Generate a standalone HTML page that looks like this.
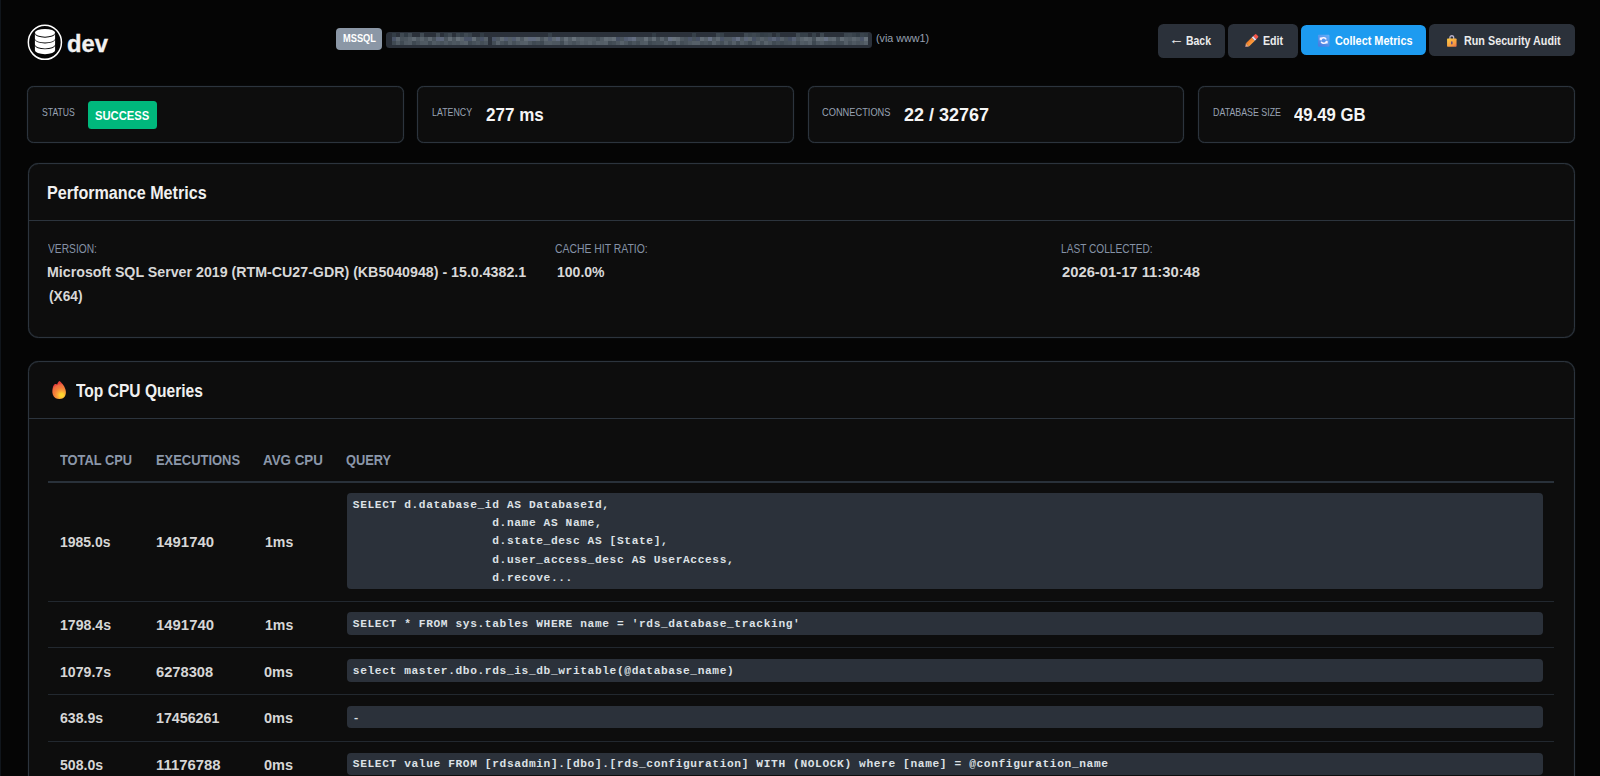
<!DOCTYPE html>
<html lang="en">
<head>
<meta charset="utf-8">
<title>dev - Database Details</title>
<style>
*{box-sizing:border-box;margin:0;padding:0}
html,body{width:1600px;height:776px;overflow:hidden;background:#050505}
body{font-family:"Liberation Sans", sans-serif;color:#e6e6e6;position:relative}
.edge{position:absolute;left:0;top:0;width:1px;height:776px;background:#10151b}
.abs{position:absolute}
.t{position:absolute;display:block;white-space:pre;line-height:1;transform-origin:0 0}
.badge{left:335.5px;top:28px;width:46.5px;height:21.5px;border-radius:4px;background:#8b97a6}
.conn{left:385.5px;top:32px;width:486px;height:16px;border-radius:3.5px;background:#2b313a;overflow:hidden}
.mos{position:absolute;left:0;top:0}
.btn{border-radius:5.5px;background:#2b313a}
.btn.blue{background:#1d9bf0}
.stat{top:85.6px;width:376.5px;height:57.2px;box-shadow:0 0 1px 0 #2c343d,inset 0 0 1px 0 #2c343d;border:1.25px solid #2c343d;border-radius:6.5px;background:#0d0d0d}
.okb{left:88px;top:101.2px;width:69px;height:27.6px;border-radius:3.5px;background:#00b87c}
.card{left:27.5px;width:1547.3px;box-shadow:0 0 1px 0 #2c343d,inset 0 0 1px 0 #2c343d;border:1.25px solid #2c343d;border-radius:10.5px;background:#0d0d0d}
.hr{position:absolute;left:0;right:0;height:1.25px;background:#2c343d}
.rl{position:absolute;left:48px;width:1506px;height:1px;background:#22282f}
.code{position:absolute;left:346.5px;width:1196.4px;border-radius:4px;background:#2b313a;font-family:"Liberation Mono", monospace;font-size:11.2px;letter-spacing:0.624px;font-weight:700;line-height:18.36px;color:#dde1e6;padding:0 0 0 6.3px;white-space:pre;overflow:hidden}
</style>
</head>
<body>
<div class="edge"></div>

<header>
<svg class="abs" style="left:27px;top:24px" width="36" height="37" viewBox="0 0 36 37">
<ellipse cx="17.9" cy="18.3" rx="16.55" ry="17.05" fill="none" stroke="#fff" stroke-width="1.5"/>
<g fill="#fff"><ellipse cx="18" cy="8.8" rx="10.1" ry="3.9"/><path d="M7.9 9.75A10.1 3.9 0 0 0 28.1 9.75V14.65A10.1 3.9 0 0 1 7.9 14.65Z"/><path d="M7.9 15.60A10.1 3.9 0 0 0 28.1 15.60V20.50A10.1 3.9 0 0 1 7.9 20.50Z"/><path d="M7.9 21.45A10.1 3.9 0 0 0 28.1 21.45V26.35A10.1 3.9 0 0 1 7.9 26.35Z"/></g>
</svg>
<h1><span class="t" style="left:66.73px;top:32px;font-size:24.60px;font-weight:700;color:#f2f2f2;transform:scaleX(0.9664);-webkit-text-stroke:0.35px #f2f2f2;">dev</span></h1>
<div class="abs badge"></div><span class="t" style="left:342.50px;top:33px;font-size:10.90px;font-weight:700;color:#ffffff;transform:scaleX(0.8523);">MSSQL</span>
<div class="abs conn"><svg class="mos" width="486" height="16" viewBox="0 0 486 16" aria-hidden="true"><rect x="6" y="1" width="4" height="4" fill="#343e47"/><rect x="6" y="5" width="4" height="4" fill="#495366"/><rect x="6" y="9" width="4" height="4" fill="#404a53"/><rect x="10" y="5" width="4" height="4" fill="#5d6770"/><rect x="10" y="9" width="4" height="4" fill="#505a63"/><rect x="14" y="1" width="4" height="4" fill="#404a53"/><rect x="14" y="5" width="4" height="4" fill="#48525b"/><rect x="14" y="9" width="4" height="4" fill="#404a53"/><rect x="18" y="1" width="4" height="4" fill="#323c45"/><rect x="18" y="5" width="4" height="4" fill="#4b555e"/><rect x="18" y="9" width="4" height="4" fill="#4f5962"/><rect x="22" y="1" width="4" height="4" fill="#424c55"/><rect x="22" y="5" width="4" height="4" fill="#545e67"/><rect x="22" y="9" width="4" height="4" fill="#525c65"/><rect x="26" y="5" width="4" height="4" fill="#5f6972"/><rect x="26" y="9" width="4" height="4" fill="#3f4952"/><rect x="30" y="5" width="4" height="4" fill="#4e5861"/><rect x="30" y="9" width="4" height="4" fill="#47515a"/><rect x="34" y="1" width="4" height="4" fill="#414b54"/><rect x="34" y="5" width="4" height="4" fill="#59636c"/><rect x="34" y="9" width="4" height="4" fill="#4f5962"/><rect x="38" y="5" width="4" height="4" fill="#4c565f"/><rect x="38" y="9" width="4" height="4" fill="#505a63"/><rect x="42" y="5" width="4" height="4" fill="#5d6770"/><rect x="42" y="9" width="4" height="4" fill="#414b54"/><rect x="46" y="5" width="4" height="4" fill="#49535c"/><rect x="46" y="9" width="4" height="4" fill="#515b64"/><rect x="50" y="1" width="4" height="4" fill="#414b54"/><rect x="50" y="5" width="4" height="4" fill="#5a6477"/><rect x="50" y="9" width="4" height="4" fill="#4c565f"/><rect x="54" y="5" width="4" height="4" fill="#5d677a"/><rect x="54" y="9" width="4" height="4" fill="#47515a"/><rect x="58" y="1" width="4" height="4" fill="#353f48"/><rect x="58" y="5" width="4" height="4" fill="#4b555e"/><rect x="58" y="9" width="4" height="4" fill="#505a63"/><rect x="62" y="1" width="4" height="4" fill="#3f4952"/><rect x="62" y="5" width="4" height="4" fill="#626c75"/><rect x="62" y="9" width="4" height="4" fill="#47515a"/><rect x="66" y="5" width="4" height="4" fill="#4d5760"/><rect x="66" y="9" width="4" height="4" fill="#4e5861"/><rect x="70" y="1" width="4" height="4" fill="#3a444d"/><rect x="70" y="5" width="4" height="4" fill="#656f78"/><rect x="70" y="9" width="4" height="4" fill="#4b555e"/><rect x="74" y="1" width="4" height="4" fill="#323c45"/><rect x="74" y="5" width="4" height="4" fill="#5b656e"/><rect x="74" y="9" width="4" height="4" fill="#545e67"/><rect x="78" y="1" width="4" height="4" fill="#3f4952"/><rect x="78" y="5" width="4" height="4" fill="#4a5467"/><rect x="78" y="9" width="4" height="4" fill="#58626b"/><rect x="82" y="1" width="4" height="4" fill="#38424b"/><rect x="82" y="5" width="4" height="4" fill="#4a5467"/><rect x="82" y="9" width="4" height="4" fill="#3f4952"/><rect x="86" y="5" width="4" height="4" fill="#626c75"/><rect x="86" y="9" width="4" height="4" fill="#47515a"/><rect x="90" y="5" width="4" height="4" fill="#47515a"/><rect x="90" y="9" width="4" height="4" fill="#4c565f"/><rect x="94" y="1" width="4" height="4" fill="#333d46"/><rect x="94" y="5" width="4" height="4" fill="#495366"/><rect x="94" y="9" width="4" height="4" fill="#444e57"/><rect x="98" y="5" width="4" height="4" fill="#555f68"/><rect x="98" y="9" width="4" height="4" fill="#4a545d"/><rect x="106" y="5" width="4" height="4" fill="#4b5568"/><rect x="106" y="9" width="4" height="4" fill="#434d56"/><rect x="110" y="5" width="4" height="4" fill="#4e5861"/><rect x="110" y="9" width="4" height="4" fill="#58626b"/><rect x="114" y="5" width="4" height="4" fill="#606a73"/><rect x="114" y="9" width="4" height="4" fill="#49535c"/><rect x="118" y="5" width="4" height="4" fill="#545e71"/><rect x="118" y="9" width="4" height="4" fill="#424c55"/><rect x="122" y="5" width="4" height="4" fill="#545e67"/><rect x="122" y="9" width="4" height="4" fill="#535d66"/><rect x="126" y="5" width="4" height="4" fill="#515b6e"/><rect x="126" y="9" width="4" height="4" fill="#465059"/><rect x="130" y="5" width="4" height="4" fill="#606a73"/><rect x="130" y="9" width="4" height="4" fill="#4f5962"/><rect x="134" y="5" width="4" height="4" fill="#4e5861"/><rect x="134" y="9" width="4" height="4" fill="#545e67"/><rect x="138" y="5" width="4" height="4" fill="#636d76"/><rect x="138" y="9" width="4" height="4" fill="#566069"/><rect x="142" y="5" width="4" height="4" fill="#5f697c"/><rect x="142" y="9" width="4" height="4" fill="#4a545d"/><rect x="146" y="5" width="4" height="4" fill="#5f697c"/><rect x="146" y="9" width="4" height="4" fill="#3f4952"/><rect x="150" y="5" width="4" height="4" fill="#626c75"/><rect x="150" y="9" width="4" height="4" fill="#434d56"/><rect x="154" y="5" width="4" height="4" fill="#4c565f"/><rect x="154" y="9" width="4" height="4" fill="#3e4851"/><rect x="158" y="5" width="4" height="4" fill="#5d6770"/><rect x="158" y="9" width="4" height="4" fill="#515b64"/><rect x="162" y="1" width="4" height="4" fill="#364049"/><rect x="162" y="5" width="4" height="4" fill="#4f596c"/><rect x="162" y="9" width="4" height="4" fill="#525c65"/><rect x="166" y="5" width="4" height="4" fill="#5d6770"/><rect x="166" y="9" width="4" height="4" fill="#4d5760"/><rect x="170" y="5" width="4" height="4" fill="#636d80"/><rect x="170" y="9" width="4" height="4" fill="#4d5760"/><rect x="174" y="5" width="4" height="4" fill="#4f5962"/><rect x="174" y="9" width="4" height="4" fill="#414b54"/><rect x="178" y="5" width="4" height="4" fill="#646e77"/><rect x="178" y="9" width="4" height="4" fill="#58626b"/><rect x="182" y="5" width="4" height="4" fill="#535d66"/><rect x="182" y="9" width="4" height="4" fill="#4e5861"/><rect x="186" y="5" width="4" height="4" fill="#67717a"/><rect x="186" y="9" width="4" height="4" fill="#47515a"/><rect x="190" y="5" width="4" height="4" fill="#566069"/><rect x="190" y="9" width="4" height="4" fill="#4e5861"/><rect x="194" y="5" width="4" height="4" fill="#5c666f"/><rect x="194" y="9" width="4" height="4" fill="#566069"/><rect x="198" y="5" width="4" height="4" fill="#545e67"/><rect x="198" y="9" width="4" height="4" fill="#515b64"/><rect x="202" y="5" width="4" height="4" fill="#555f68"/><rect x="202" y="9" width="4" height="4" fill="#58626b"/><rect x="206" y="5" width="4" height="4" fill="#525c65"/><rect x="206" y="9" width="4" height="4" fill="#4e5861"/><rect x="210" y="5" width="4" height="4" fill="#47515a"/><rect x="210" y="9" width="4" height="4" fill="#57616a"/><rect x="214" y="5" width="4" height="4" fill="#525c65"/><rect x="214" y="9" width="4" height="4" fill="#545e67"/><rect x="218" y="5" width="4" height="4" fill="#626c75"/><rect x="218" y="9" width="4" height="4" fill="#57616a"/><rect x="222" y="5" width="4" height="4" fill="#5d6770"/><rect x="222" y="9" width="4" height="4" fill="#404a53"/><rect x="226" y="5" width="4" height="4" fill="#646e77"/><rect x="226" y="9" width="4" height="4" fill="#444e57"/><rect x="230" y="5" width="4" height="4" fill="#465063"/><rect x="230" y="9" width="4" height="4" fill="#4d5760"/><rect x="234" y="5" width="4" height="4" fill="#4b555e"/><rect x="234" y="9" width="4" height="4" fill="#58626b"/><rect x="238" y="5" width="4" height="4" fill="#525c6f"/><rect x="238" y="9" width="4" height="4" fill="#4d5760"/><rect x="242" y="5" width="4" height="4" fill="#5b6578"/><rect x="242" y="9" width="4" height="4" fill="#404a53"/><rect x="246" y="5" width="4" height="4" fill="#636d80"/><rect x="246" y="9" width="4" height="4" fill="#4a545d"/><rect x="250" y="5" width="4" height="4" fill="#505a63"/><rect x="250" y="9" width="4" height="4" fill="#434d56"/><rect x="254" y="5" width="4" height="4" fill="#4f5962"/><rect x="254" y="9" width="4" height="4" fill="#505a63"/><rect x="258" y="5" width="4" height="4" fill="#646e77"/><rect x="258" y="9" width="4" height="4" fill="#535d66"/><rect x="262" y="5" width="4" height="4" fill="#4e5861"/><rect x="262" y="9" width="4" height="4" fill="#3e4851"/><rect x="266" y="1" width="4" height="4" fill="#333d46"/><rect x="266" y="5" width="4" height="4" fill="#616b74"/><rect x="266" y="9" width="4" height="4" fill="#444e57"/><rect x="270" y="5" width="4" height="4" fill="#47515a"/><rect x="270" y="9" width="4" height="4" fill="#465059"/><rect x="274" y="5" width="4" height="4" fill="#5a646d"/><rect x="274" y="9" width="4" height="4" fill="#465059"/><rect x="278" y="5" width="4" height="4" fill="#49535c"/><rect x="278" y="9" width="4" height="4" fill="#555f68"/><rect x="282" y="5" width="4" height="4" fill="#677184"/><rect x="282" y="9" width="4" height="4" fill="#4b555e"/><rect x="286" y="5" width="4" height="4" fill="#68727b"/><rect x="286" y="9" width="4" height="4" fill="#424c55"/><rect x="290" y="5" width="4" height="4" fill="#626c75"/><rect x="290" y="9" width="4" height="4" fill="#566069"/><rect x="294" y="5" width="4" height="4" fill="#4f5962"/><rect x="294" y="9" width="4" height="4" fill="#434d56"/><rect x="298" y="5" width="4" height="4" fill="#49535c"/><rect x="298" y="9" width="4" height="4" fill="#48525b"/><rect x="302" y="5" width="4" height="4" fill="#4c5669"/><rect x="302" y="9" width="4" height="4" fill="#4f5962"/><rect x="306" y="1" width="4" height="4" fill="#364049"/><rect x="306" y="5" width="4" height="4" fill="#48525b"/><rect x="306" y="9" width="4" height="4" fill="#566069"/><rect x="310" y="5" width="4" height="4" fill="#475164"/><rect x="310" y="9" width="4" height="4" fill="#566069"/><rect x="314" y="5" width="4" height="4" fill="#626c75"/><rect x="314" y="9" width="4" height="4" fill="#48525b"/><rect x="318" y="5" width="4" height="4" fill="#57616a"/><rect x="318" y="9" width="4" height="4" fill="#4c565f"/><rect x="322" y="5" width="4" height="4" fill="#667083"/><rect x="322" y="9" width="4" height="4" fill="#454f58"/><rect x="326" y="5" width="4" height="4" fill="#525c65"/><rect x="326" y="9" width="4" height="4" fill="#58626b"/><rect x="330" y="1" width="4" height="4" fill="#3d4750"/><rect x="330" y="5" width="4" height="4" fill="#5f6972"/><rect x="330" y="9" width="4" height="4" fill="#4c565f"/><rect x="334" y="1" width="4" height="4" fill="#37414a"/><rect x="334" y="5" width="4" height="4" fill="#4a5467"/><rect x="334" y="9" width="4" height="4" fill="#444e57"/><rect x="338" y="5" width="4" height="4" fill="#4f5962"/><rect x="338" y="9" width="4" height="4" fill="#545e67"/><rect x="342" y="5" width="4" height="4" fill="#4f5962"/><rect x="342" y="9" width="4" height="4" fill="#465059"/><rect x="346" y="5" width="4" height="4" fill="#545e71"/><rect x="346" y="9" width="4" height="4" fill="#555f68"/><rect x="350" y="5" width="4" height="4" fill="#656f82"/><rect x="350" y="9" width="4" height="4" fill="#434d56"/><rect x="354" y="5" width="4" height="4" fill="#505a63"/><rect x="354" y="9" width="4" height="4" fill="#545e67"/><rect x="358" y="1" width="4" height="4" fill="#404a53"/><rect x="358" y="5" width="4" height="4" fill="#5b6578"/><rect x="358" y="9" width="4" height="4" fill="#4b555e"/><rect x="362" y="1" width="4" height="4" fill="#3a444d"/><rect x="362" y="5" width="4" height="4" fill="#5d6770"/><rect x="362" y="9" width="4" height="4" fill="#3e4851"/><rect x="366" y="1" width="4" height="4" fill="#3e4851"/><rect x="366" y="5" width="4" height="4" fill="#475164"/><rect x="366" y="9" width="4" height="4" fill="#4a545d"/><rect x="370" y="1" width="4" height="4" fill="#39434c"/><rect x="370" y="5" width="4" height="4" fill="#4d5760"/><rect x="370" y="9" width="4" height="4" fill="#57616a"/><rect x="374" y="1" width="4" height="4" fill="#333d46"/><rect x="374" y="5" width="4" height="4" fill="#566069"/><rect x="374" y="9" width="4" height="4" fill="#465059"/><rect x="378" y="1" width="4" height="4" fill="#353f48"/><rect x="378" y="5" width="4" height="4" fill="#4e5861"/><rect x="378" y="9" width="4" height="4" fill="#58626b"/><rect x="382" y="1" width="4" height="4" fill="#38424b"/><rect x="382" y="5" width="4" height="4" fill="#4f596c"/><rect x="382" y="9" width="4" height="4" fill="#4f5962"/><rect x="386" y="5" width="4" height="4" fill="#5a6477"/><rect x="386" y="9" width="4" height="4" fill="#404a53"/><rect x="390" y="1" width="4" height="4" fill="#353f48"/><rect x="390" y="5" width="4" height="4" fill="#4a5467"/><rect x="390" y="9" width="4" height="4" fill="#465059"/><rect x="394" y="5" width="4" height="4" fill="#566069"/><rect x="394" y="9" width="4" height="4" fill="#404a53"/><rect x="398" y="5" width="4" height="4" fill="#4a545d"/><rect x="398" y="9" width="4" height="4" fill="#465059"/><rect x="402" y="5" width="4" height="4" fill="#465063"/><rect x="402" y="9" width="4" height="4" fill="#48525b"/><rect x="406" y="5" width="4" height="4" fill="#576174"/><rect x="406" y="9" width="4" height="4" fill="#515b64"/><rect x="410" y="1" width="4" height="4" fill="#404a53"/><rect x="410" y="5" width="4" height="4" fill="#4d5760"/><rect x="410" y="9" width="4" height="4" fill="#434d56"/><rect x="414" y="1" width="4" height="4" fill="#353f48"/><rect x="414" y="5" width="4" height="4" fill="#59636c"/><rect x="414" y="9" width="4" height="4" fill="#525c65"/><rect x="418" y="1" width="4" height="4" fill="#364049"/><rect x="418" y="5" width="4" height="4" fill="#626c75"/><rect x="418" y="9" width="4" height="4" fill="#4e5861"/><rect x="422" y="5" width="4" height="4" fill="#5c666f"/><rect x="422" y="9" width="4" height="4" fill="#57616a"/><rect x="426" y="1" width="4" height="4" fill="#38424b"/><rect x="426" y="5" width="4" height="4" fill="#465059"/><rect x="426" y="9" width="4" height="4" fill="#3e4851"/><rect x="430" y="5" width="4" height="4" fill="#667079"/><rect x="430" y="9" width="4" height="4" fill="#4d5760"/><rect x="434" y="1" width="4" height="4" fill="#3e4851"/><rect x="434" y="5" width="4" height="4" fill="#616b74"/><rect x="434" y="9" width="4" height="4" fill="#535d66"/><rect x="438" y="5" width="4" height="4" fill="#667083"/><rect x="438" y="9" width="4" height="4" fill="#47515a"/><rect x="442" y="5" width="4" height="4" fill="#5b656e"/><rect x="442" y="9" width="4" height="4" fill="#444e57"/><rect x="446" y="5" width="4" height="4" fill="#5f6972"/><rect x="446" y="9" width="4" height="4" fill="#49535c"/><rect x="450" y="5" width="4" height="4" fill="#465059"/><rect x="450" y="9" width="4" height="4" fill="#404a53"/><rect x="454" y="5" width="4" height="4" fill="#616b74"/><rect x="454" y="9" width="4" height="4" fill="#434d56"/><rect x="458" y="1" width="4" height="4" fill="#3c464f"/><rect x="458" y="5" width="4" height="4" fill="#555f68"/><rect x="458" y="9" width="4" height="4" fill="#545e67"/><rect x="462" y="1" width="4" height="4" fill="#3e4851"/><rect x="462" y="5" width="4" height="4" fill="#505a63"/><rect x="462" y="9" width="4" height="4" fill="#465059"/><rect x="466" y="1" width="4" height="4" fill="#38424b"/><rect x="466" y="5" width="4" height="4" fill="#5b656e"/><rect x="466" y="9" width="4" height="4" fill="#4f5962"/><rect x="470" y="1" width="4" height="4" fill="#313b44"/><rect x="470" y="5" width="4" height="4" fill="#535d66"/><rect x="470" y="9" width="4" height="4" fill="#49535c"/><rect x="474" y="1" width="4" height="4" fill="#3a444d"/><rect x="474" y="5" width="4" height="4" fill="#4b5568"/><rect x="474" y="9" width="4" height="4" fill="#4d5760"/><rect x="478" y="1" width="4" height="4" fill="#364049"/><rect x="478" y="5" width="4" height="4" fill="#667079"/><rect x="478" y="9" width="4" height="4" fill="#566069"/></svg></div>
<span class="t" style="left:876.00px;top:33px;font-size:11.50px;color:#98a2b3;transform:scaleX(0.9345);">(via www1)</span>
<nav>
<div class="abs btn" style="left:1158px;top:24px;width:67px;height:33.5px"></div><span class="t" style="left:1169.44px;top:32px;font-size:14.50px;font-weight:700;color:#ececec;transform:scaleX(1.0300);">←</span><span class="t" style="left:1185.60px;top:35px;font-size:12.72px;font-weight:700;color:#ececec;transform:scaleX(0.8210);">Back</span>
<div class="abs btn" style="left:1228.2px;top:24px;width:69.7px;height:33.5px"></div><svg class="abs" style="left:1241px;top:30px" width="21" height="21" viewBox="-10.5 -10.5 21 21" aria-hidden="true">
<defs><linearGradient id="pg" x1="0" y1="0" x2="0" y2="1"><stop offset="0" stop-color="#f07c28"/><stop offset="1" stop-color="#ffa040"/></linearGradient></defs>
<g transform="translate(0.1,0.3) rotate(-44.5)">
<path d="M-8.800 0L-5.900-2.200V2.200Z" fill="#e3ae86"/>
<path d="M-8.800 0L-7.600-.9V.9Z" fill="#9c4f86"/>
<rect x="-5.900" y="-2.200" width="8.300" height="4.400" fill="url(#pg)"/>
<rect x="2.400" y="-2.200" width="2.100" height="4.400" fill="#e4dcf2"/>
<path d="M4.500-2.200H6.800Q7.900-2.200 7.900-1.100V1.100Q7.900 2.200 6.800 2.200H4.500Z" fill="#f4564a"/>
</g></svg><span class="t" style="left:1263.10px;top:35px;font-size:12.72px;font-weight:700;color:#ececec;transform:scaleX(0.8360);">Edit</span>
<div class="abs btn blue" style="left:1301.1px;top:25px;width:124.8px;height:29.8px"></div><svg class="abs" style="left:1317px;top:34px" width="13" height="14" viewBox="0 0 13 14" aria-hidden="true">
<defs><linearGradient id="rg" x1="1" y1="0" x2="0.300" y2="1"><stop offset="0" stop-color="#66b1f9"/><stop offset="1" stop-color="#4a7ee1"/></linearGradient></defs>
<g transform="translate(0.960,0.850)">
<rect x="0" y="0" width="11.500" height="11.800" rx="0.800" fill="url(#rg)"/>
<g fill="none" stroke="#fbf4ff" stroke-width="1.500" stroke-linecap="round">
<path d="M3.000 4.850A2.800 2.800 0 0 1 7.900 4.050"/>
<path d="M8.400 6.550A2.800 2.800 0 0 1 3.500 7.350"/>
</g>
<path d="M1.700 2.750H4.700L1.700 5.550Z" fill="#fbf4ff"/>
<path d="M9.700 8.650H6.700L9.700 5.850Z" fill="#fbf4ff"/>
</g>
</svg><span class="t" style="left:1335.10px;top:34px;font-size:13.50px;font-weight:700;color:#ffffff;transform:scaleX(0.8072);">Collect Metrics</span>
<div class="abs btn" style="left:1429px;top:24px;width:146px;height:31.6px"></div><svg class="abs" style="left:1445px;top:33px" width="14" height="16" viewBox="0 0 14 16" aria-hidden="true">
<defs><linearGradient id="lg" x1="0.100" y1="0" x2="0.900" y2="1"><stop offset="0" stop-color="#fdcb44"/><stop offset="0.700" stop-color="#f89a42"/><stop offset="1" stop-color="#e87048"/></linearGradient></defs>
<g transform="translate(0.770,0.930)">
<path d="M4.150 5.000V3.700A1.900 1.900 0 0 1 7.950 3.700V5.000" fill="none" stroke="#b9b1cb" stroke-width="1.300"/>
<rect x="1.300" y="4.500" width="9.500" height="8.300" rx="0.700" fill="url(#lg)"/>
<rect x="5.300" y="7.200" width="1.500" height="3.300" rx="0.750" fill="#5c4a86"/>
</g>
</svg><span class="t" style="left:1463.50px;top:34px;font-size:13.50px;font-weight:700;color:#ececec;transform:scaleX(0.7983);">Run Security Audit</span>
</nav>
</header>

<section>
<div class="abs stat" style="left:27.1px"></div><span class="t" style="left:41.60px;top:106px;font-size:11.77px;color:#98a2b3;transform:scaleX(0.7363);">STATUS</span><div class="abs okb"></div><span class="t" style="left:95.40px;top:109px;font-size:13.66px;font-weight:700;color:#ffffff;transform:scaleX(0.8223);">SUCCESS</span>
<div class="abs stat" style="left:417.2px"></div><span class="t" style="left:431.90px;top:106px;font-size:11.77px;color:#98a2b3;transform:scaleX(0.7508);">LATENCY</span><span class="t" style="left:486.30px;top:105px;font-size:19.04px;font-weight:700;color:#f5f5f5;transform:scaleX(0.8943);">277 ms</span>
<div class="abs stat" style="left:807.8px"></div><span class="t" style="left:822.30px;top:106px;font-size:11.77px;color:#98a2b3;transform:scaleX(0.7877);">CONNECTIONS</span><span class="t" style="left:904.40px;top:105px;font-size:19.04px;font-weight:700;color:#f5f5f5;transform:scaleX(0.9444);">22 / 32767</span>
<div class="abs stat" style="left:1198.1px"></div><span class="t" style="left:1212.90px;top:106px;font-size:11.77px;color:#98a2b3;transform:scaleX(0.7517);">DATABASE SIZE</span><span class="t" style="left:1294.40px;top:105px;font-size:19.04px;font-weight:700;color:#f5f5f5;transform:scaleX(0.8784);">49.49 GB</span>
</section>

<section>
<div class="abs card" style="top:163px;height:174.8px"><div class="hr" style="top:55.6px"></div></div>
<h2><span class="t" style="left:46.93px;top:184px;font-size:18.53px;font-weight:700;color:#f0f0f0;transform:scaleX(0.8715);">Performance Metrics</span></h2>
<span class="t" style="left:48.10px;top:242px;font-size:13.23px;color:#8592a6;transform:scaleX(0.7744);">VERSION:</span><span class="t" style="left:47.18px;top:264px;font-size:15.41px;font-weight:700;color:#d8d8d8;transform:scaleX(0.9224);">Microsoft SQL Server 2019 (RTM-CU27-GDR) (KB5040948) - 15.0.4382.1</span><span class="t" style="left:48.60px;top:288px;font-size:15.41px;font-weight:700;color:#d8d8d8;transform:scaleX(0.8904);">(X64)</span>
<span class="t" style="left:555.40px;top:242px;font-size:13.23px;color:#8592a6;transform:scaleX(0.7876);">CACHE HIT RATIO:</span><span class="t" style="left:556.50px;top:264px;font-size:15.41px;font-weight:700;color:#d8d8d8;transform:scaleX(0.9102);">100.0%</span>
<span class="t" style="left:1061.23px;top:242px;font-size:13.23px;color:#8592a6;transform:scaleX(0.7665);">LAST COLLECTED:</span><span class="t" style="left:1062.20px;top:264px;font-size:15.41px;font-weight:700;color:#d8d8d8;transform:scaleX(0.9591);">2026-01-17 11:30:48</span>
</section>

<section>
<div class="abs card" style="top:360.8px;height:440px"><div class="hr" style="top:56.4px"></div></div>
<svg class="abs" style="left:51px;top:380px" width="17" height="20" viewBox="0 0 17 20" aria-hidden="true">
<defs><radialGradient id="fg" cx="10.600" cy="15.200" r="12" gradientUnits="userSpaceOnUse"><stop offset="0" stop-color="#ffdb2e"/><stop offset="0.160" stop-color="#ffd030"/><stop offset="0.340" stop-color="#fba838"/><stop offset="0.600" stop-color="#f4803a"/><stop offset="0.860" stop-color="#ee6a40"/><stop offset="1" stop-color="#e6403a"/></radialGradient></defs>
<path d="M8.700 1C10.400 2.600 13.300 5.600 14.400 9.200C15.600 13 14.600 16.600 12.000 18.300C10.200 19.300 6.500 19.300 4.700 18.300C2.000 16.700 1.000 13.400 1.400 10C1.700 7.600 2.300 5.400 3.600 4.300C4.400 3.700 5.600 3.900 6.300 4.400C6.500 3 7.300 1.600 8.700 1Z" fill="url(#fg)"/>
</svg><h2><span class="t" style="left:76.30px;top:382px;font-size:18.17px;font-weight:700;color:#f0f0f0;transform:scaleX(0.8575);">Top CPU Queries</span></h2>
<span class="t" style="left:59.80px;top:453px;font-size:14.39px;font-weight:700;color:#8b97a9;transform:scaleX(0.8940);">TOTAL CPU</span><span class="t" style="left:155.90px;top:453px;font-size:14.39px;font-weight:700;color:#8b97a9;transform:scaleX(0.8992);">EXECUTIONS</span><span class="t" style="left:263.40px;top:453px;font-size:14.39px;font-weight:700;color:#8b97a9;transform:scaleX(0.9306);">AVG CPU</span><span class="t" style="left:346.00px;top:453px;font-size:14.39px;font-weight:700;color:#8b97a9;transform:scaleX(0.8922);">QUERY</span>
<div class="rl" style="top:481px;height:2px;background:#29313a"></div>
<span class="t" style="left:60.25px;top:534px;font-size:15.41px;font-weight:700;color:#d6d6d6;transform:scaleX(0.9070);">1985.0s</span><span class="t" style="left:156.30px;top:534px;font-size:15.41px;font-weight:700;color:#d6d6d6;transform:scaleX(0.9670);">1491740</span><span class="t" style="left:264.60px;top:534px;font-size:15.41px;font-weight:700;color:#d6d6d6;transform:scaleX(0.9159);">1ms</span>
<div class="code" style="top:493.3px;height:95.4px;padding-top:2.36px">SELECT d.database_id AS DatabaseId,
                   d.name AS Name,
                   d.state_desc AS [State],
                   d.user_access_desc AS UserAccess,
                   d.recove...</div>
<div class="rl" style="top:600.5px"></div>
<span class="t" style="left:60.00px;top:617px;font-size:15.41px;font-weight:700;color:#d6d6d6;transform:scaleX(0.9170);">1798.4s</span><span class="t" style="left:156.30px;top:617px;font-size:15.41px;font-weight:700;color:#d6d6d6;transform:scaleX(0.9670);">1491740</span><span class="t" style="left:264.60px;top:617px;font-size:15.41px;font-weight:700;color:#d6d6d6;transform:scaleX(0.9159);">1ms</span>
<div class="code" style="top:612.2px;height:22.6px;padding-top:2.86px">SELECT * FROM sys.tables WHERE name = 'rds_database_tracking'</div>
<div class="rl" style="top:647.4px"></div>
<span class="t" style="left:60.00px;top:664px;font-size:15.41px;font-weight:700;color:#d6d6d6;transform:scaleX(0.9170);">1079.7s</span><span class="t" style="left:155.50px;top:664px;font-size:15.41px;font-weight:700;color:#d6d6d6;transform:scaleX(0.9527);">6278308</span><span class="t" style="left:263.80px;top:664px;font-size:15.41px;font-weight:700;color:#d6d6d6;transform:scaleX(0.9423);">0ms</span>
<div class="code" style="top:659.0px;height:22.6px;padding-top:2.86px">select master.dbo.rds_is_db_writable(@database_name)</div>
<div class="rl" style="top:694.2px"></div>
<span class="t" style="left:59.50px;top:710px;font-size:15.41px;font-weight:700;color:#d6d6d6;transform:scaleX(0.9137);">638.9s</span><span class="t" style="left:156.30px;top:710px;font-size:15.41px;font-weight:700;color:#d6d6d6;transform:scaleX(0.9243);">17456261</span><span class="t" style="left:263.80px;top:710px;font-size:15.41px;font-weight:700;color:#d6d6d6;transform:scaleX(0.9423);">0ms</span>
<div class="code" style="top:705.8px;height:22.6px;padding-top:2.86px">-</div>
<div class="rl" style="top:741.0px"></div>
<span class="t" style="left:59.50px;top:757px;font-size:15.41px;font-weight:700;color:#d6d6d6;transform:scaleX(0.9137);">508.0s</span><span class="t" style="left:156.30px;top:757px;font-size:15.41px;font-weight:700;color:#d6d6d6;transform:scaleX(0.9670);">11176788</span><span class="t" style="left:263.80px;top:757px;font-size:15.41px;font-weight:700;color:#d6d6d6;transform:scaleX(0.9423);">0ms</span>
<div class="code" style="top:752.6px;height:22.6px;padding-top:2.86px">SELECT value FROM [rdsadmin].[dbo].[rds_configuration] WITH (NOLOCK) where [name] = @configuration_name</div>
</section>
</body>
</html>
